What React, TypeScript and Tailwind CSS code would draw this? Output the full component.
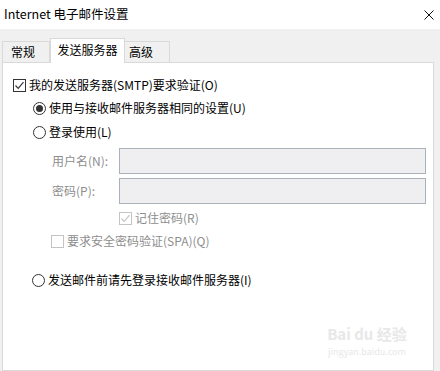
import React from "react"

const font = { fontFamily: '"Noto Sans CJK SC", "Noto Sans", sans-serif' }

function CheckBox({ checked, disabled }: { checked?: boolean; disabled?: boolean }) {
  const c = disabled ? "#c4c4c4" : "#333333"
  return (
    <svg width="13" height="13" viewBox="0 0 13 13" className="shrink-0">
      <rect x="0.5" y="0.5" width="12" height="12" fill="#ffffff" stroke={c} />
      {checked && <path d="M2.5 6.5 L5.2 9.3 L10.5 3.2" fill="none" stroke={c} strokeWidth="1.2" />}
    </svg>
  )
}

function Radio({ checked }: { checked?: boolean }) {
  return (
    <svg width="13" height="13" viewBox="0 0 13 13" className="shrink-0">
      <circle cx="6.5" cy="6.5" r="6" fill="#ffffff" stroke="#333333" />
      {checked && <circle cx="6.5" cy="6.5" r="3.5" fill="#333333" />}
    </svg>
  )
}

export default function App() {
  return (
    <div
      className="relative w-[440px] h-[371px] bg-[#f0f0f0] overflow-hidden flex flex-col text-[12px] leading-none text-black"
      style={font}
    >
      {/* title bar */}
      <div className="h-[29px] bg-white flex items-center justify-between pl-[4px] pr-[6px] shrink-0">
        <span className="text-[12.5px]">Internet 电子邮件设置</span>
        <svg width="10" height="10" viewBox="0 0 10 10">
          <path d="M0.5 0.5 L9.5 9.5 M9.5 0.5 L0.5 9.5" stroke="#111111" strokeWidth="1" />
        </svg>
      </div>

      {/* tabs */}
      <div className="h-[33px] flex items-end pl-[2px] shrink-0">
        <div className="w-[48px] h-[21px] border border-b-0 border-[#d9d9d9] flex items-center pl-[8px] pb-[1px]">
          常规
        </div>
        <div className="relative z-10 -mb-px w-[75px] h-[25px] bg-white border border-b-0 border-[#d9d9d9] flex items-center justify-center pb-[3px]">
          发送服务器
        </div>
        <div className="w-[45px] h-[21px] border border-b-0 border-l-0 border-[#d9d9d9] flex items-center pl-[4px] pb-[1px]">
          高级
        </div>
      </div>

      {/* panel */}
      <div className="ml-[2px] w-[432px] flex-1 bg-white border border-[#d9d9d9] flex flex-col pl-[10px] pt-[12px]">
        <div className="h-[20px] flex items-center gap-[3px]">
          <CheckBox checked />
          <span>我的发送服务器(SMTP)要求验证(O)</span>
        </div>

        <div className="h-[20px] mt-[3px] ml-[20px] flex items-center gap-[3px]">
          <Radio checked />
          <span>使用与接收邮件服务器相同的设置(U)</span>
        </div>

        <div className="h-[20px] mt-[4px] ml-[20px] flex items-center gap-[3px]">
          <Radio />
          <span>登录使用(L)</span>
        </div>

        <div className="h-[26px] mt-[6px] ml-[39px] flex items-center text-[#8e8e8e]">
          <span className="w-[67px]">用户名(N):</span>
          <div className="w-[307px] h-[26px] bg-[#efeff2] border border-[#a9b1b9]" />
        </div>

        <div className="h-[26px] mt-[4px] ml-[39px] flex items-center text-[#8e8e8e]">
          <span className="w-[67px]">密码(P):</span>
          <div className="w-[307px] h-[26px] bg-[#efeff2] border border-[#a9b1b9]" />
        </div>

        <div className="h-[20px] mt-[4px] ml-[106px] flex items-center gap-[3px] text-[#8e8e8e]">
          <CheckBox checked disabled />
          <span>记住密码(R)</span>
        </div>

        <div className="h-[20px] mt-[3px] ml-[38px] flex items-center gap-[3px] text-[#8e8e8e]">
          <CheckBox disabled />
          <span>要求安全密码验证(SPA)(Q)</span>
        </div>

        <div className="h-[20px] mt-[19px] ml-[19px] flex items-center gap-[3px]">
          <Radio />
          <span>发送邮件前请先登录接收邮件服务器(I)</span>
        </div>
      </div>

      {/* watermark */}
      <div className="absolute left-[323px] top-[326px] w-[88px] flex flex-col items-center text-[#e8e8e8] select-none">
        <span className="text-[15px] font-bold whitespace-nowrap">Bai du 经验</span>
        <span className="text-[9px] mt-[6px] whitespace-nowrap">jingyan.baidu.com</span>
      </div>
    </div>
  )
}
